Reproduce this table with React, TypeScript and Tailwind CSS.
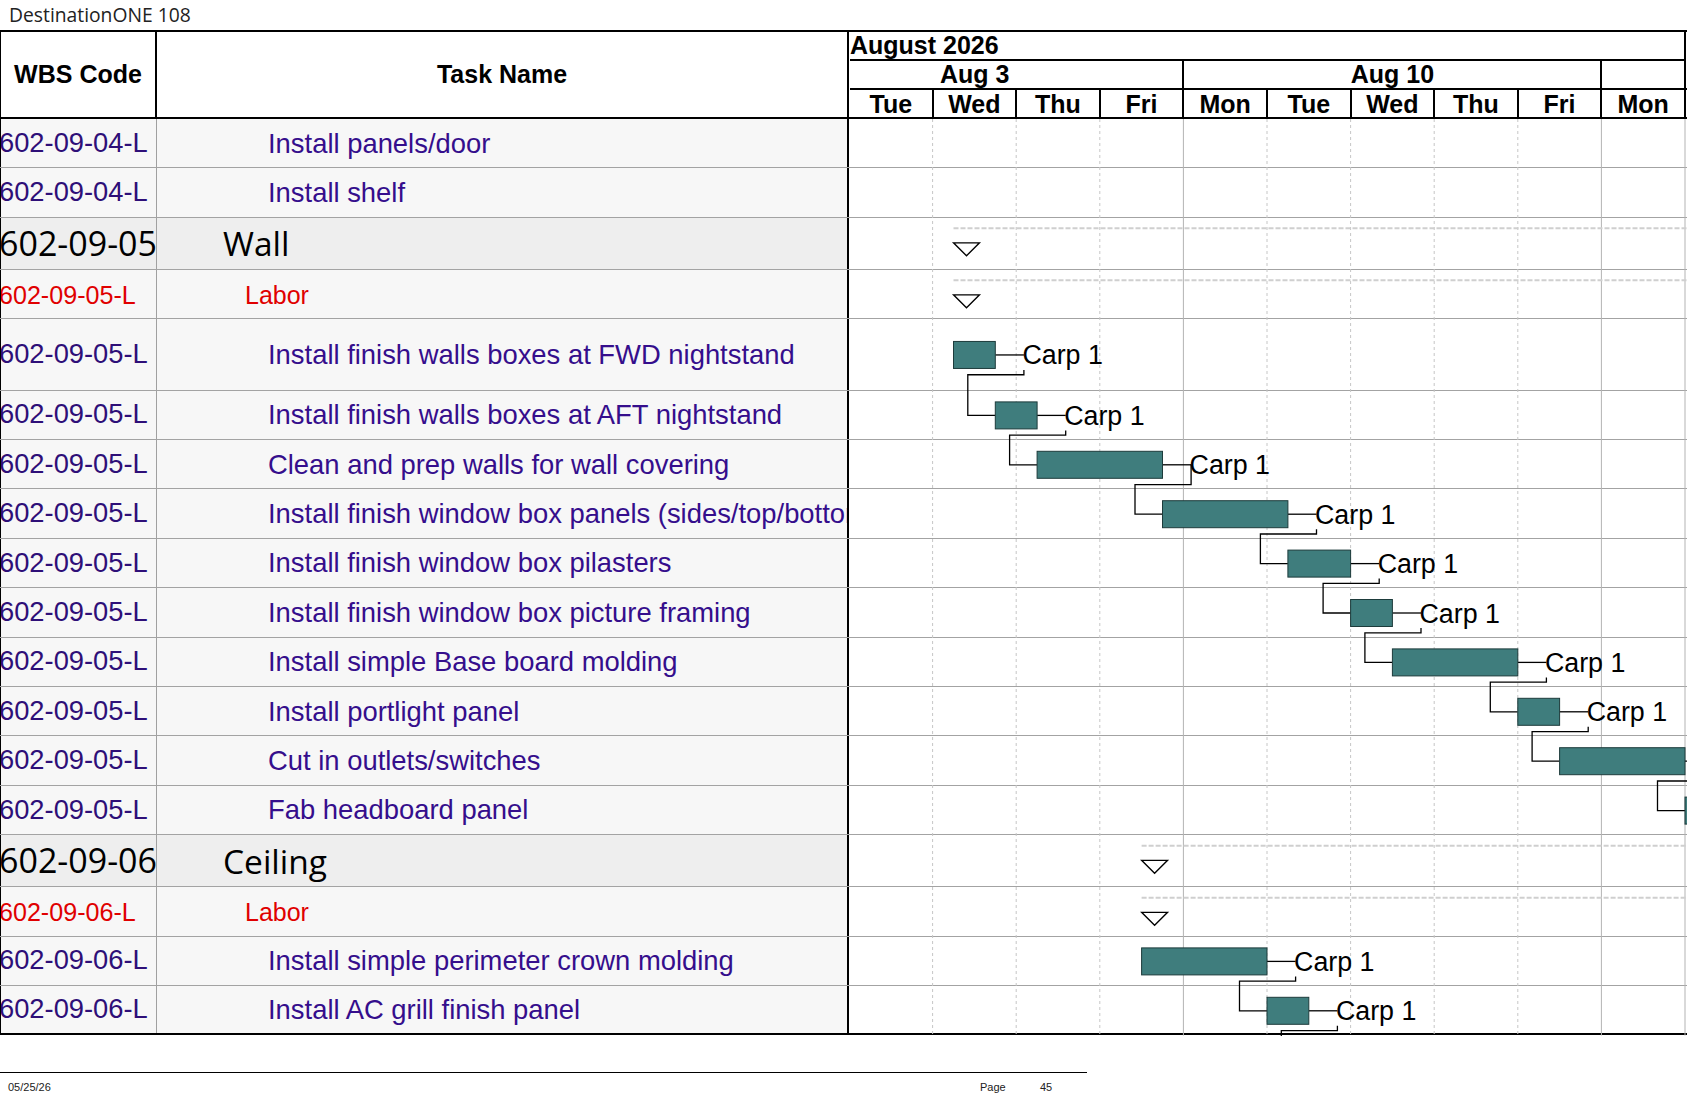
type Kind = "task" | "labor" | "summary";

interface Row {
  wbs: string;
  name: string;
  kind: Kind;
  tall?: boolean;
  bar?: [number, number];
  mark?: number;
  drop?: boolean;
}

const DAY = 83.6;
const GANTT_W = 838;

const rows: Row[] = [
  { wbs: "602-09-04-L", name: "Install panels/door", kind: "task" },
  { wbs: "602-09-04-L", name: "Install shelf", kind: "task" },
  { wbs: "602-09-05", name: "Wall", kind: "summary", mark: 1.25 },
  { wbs: "602-09-05-L", name: "Labor", kind: "labor", mark: 1.25 },
  { wbs: "602-09-05-L", name: "Install finish walls boxes at FWD nightstand", kind: "task", tall: true, bar: [1.25, 1.75] },
  { wbs: "602-09-05-L", name: "Install finish walls boxes at AFT nightstand", kind: "task", bar: [1.75, 2.25] },
  { wbs: "602-09-05-L", name: "Clean and prep walls for wall covering", kind: "task", bar: [2.25, 3.75], drop: true },
  { wbs: "602-09-05-L", name: "Install finish window box panels (sides/top/bottom)", kind: "task", bar: [3.75, 5.25] },
  { wbs: "602-09-05-L", name: "Install finish window box pilasters", kind: "task", bar: [5.25, 6] },
  { wbs: "602-09-05-L", name: "Install finish window box picture framing", kind: "task", bar: [6, 6.5] },
  { wbs: "602-09-05-L", name: "Install simple Base board molding", kind: "task", bar: [6.5, 8] },
  { wbs: "602-09-05-L", name: "Install portlight panel", kind: "task", bar: [8, 8.5] },
  { wbs: "602-09-05-L", name: "Cut in outlets/switches", kind: "task", bar: [8.5, 10] },
  { wbs: "602-09-05-L", name: "Fab headboard panel", kind: "task", bar: [10, 10.5] },
  { wbs: "602-09-06", name: "Ceiling", kind: "summary", mark: 3.5 },
  { wbs: "602-09-06-L", name: "Labor", kind: "labor", mark: 3.5 },
  { wbs: "602-09-06-L", name: "Install simple perimeter crown molding", kind: "task", bar: [3.5, 5] },
  { wbs: "602-09-06-L", name: "Install AC grill finish panel", kind: "task", bar: [5, 5.5] },
];

const heightOf = (r: Row) => (r.tall ? 71.5 : r.kind === "summary" ? 52 : 49.4);
const heightClass = (r: Row) =>
  r.tall ? "h-[71.5px]" : r.kind === "summary" ? "h-[52px]" : "h-[49.4px]";

const days = ["Tue", "Wed", "Thu", "Fri", "Mon", "Tue", "Wed", "Thu", "Fri", "Mon"];

function Chart() {
  let acc = 0;
  const geo = rows.map((r) => {
    const h = heightOf(r);
    const g = { top: acc, mid: acc + h / 2 };
    acc += h;
    return g;
  });
  const total = acc;

  const grid = [];
  for (let k = 1; k <= 10; k++) {
    const solid = k === 4 || k === 9 || k === 10;
    grid.push(
      <line
        key={"g" + k}
        x1={k * DAY}
        x2={k * DAY}
        y1={0}
        y2={total}
        stroke={solid ? "#b3b3b3" : "#c6c6c6"}
        strokeWidth={1}
        strokeDasharray={solid ? undefined : "3 3"}
      />
    );
  }

  const summary = [];
  const links = [];
  const bars = [];

  rows.forEach((r, i) => {
    const g = geo[i];
    if (r.mark !== undefined) {
      const x = r.mark * DAY;
      const t = g.top + 25;
      summary.push(
        <g key={"s" + i}>
          <line x1={x} x2={GANTT_W} y1={g.top + 10.5} y2={g.top + 10.5} stroke="#cfcfcf" strokeWidth={2} strokeDasharray="5 2" />
          <polygon points={`${x},${t} ${x + 26},${t} ${x + 13},${t + 13}`} fill="#fff" stroke="#000" strokeWidth={1.3} />
        </g>
      );
    }
    if (r.bar) {
      const [s, e] = r.bar;
      const x1 = s * DAY;
      const x2 = e * DAY;
      const bottom = g.mid + 13.5;
      const lx = x2 + 28.6;
      bars.push(
        <g key={"b" + i}>
          <line x1={x2} x2={lx} y1={g.mid} y2={g.mid} stroke="#000" strokeWidth={1.3} />
          <rect x={x1} y={g.mid - 13.5} width={x2 - x1} height={27} fill="#3f7d7d" stroke="#1d3b3b" strokeWidth={1} />
          <text
            x={lx - 1.5}
            y={g.mid + 9.5}
            fontSize={26.8}
            fontFamily="'Liberation Sans', Arial, sans-serif"
            fill="#000"
          >
            Carp 1
          </text>
        </g>
      );
      const last = i === rows.length - 1;
      const nextStart = last ? 5.5 : rows[i + 1].bar?.[0];
      if (nextStart !== undefined) {
        const nextMid = last ? total + 30 : geo[i + 1].mid;
        const dy = bottom + 6.3;
        const ex = nextStart * DAY - 27.5;
        links.push(
          <path
            key={"l" + i}
            d={`M${lx} ${r.drop ? g.mid : bottom + 1.5} V${dy} H${ex} V${nextMid} H${nextStart * DAY}`}
            fill="none"
            stroke="#000"
            strokeWidth={1.3}
          />
        );
      }
    }
  });

  return (
    <svg
      className="absolute left-[849px] top-0"
      width={GANTT_W}
      height={total}
      viewBox={`0 0 ${GANTT_W} ${total}`}
    >
      {grid}
      {summary}
      {links}
      {bars}
    </svg>
  );
}

function BodyRow({ r, last }: { r: Row; last: boolean }) {
  const bg = r.kind === "summary" ? "bg-[#eeeeee]" : "bg-[#f7f7f7]";
  const line = last ? "border-black border-b-2" : "border-[#a3a3a3] border-b";
  const wbsText =
    r.kind === "summary"
      ? "text-black text-[34px] font-['Open_Sans',sans-serif]"
      : r.kind === "labor"
      ? "text-[#e00000] text-[25.1px] pt-[3px]"
      : "text-[#2e0f78] text-[27.3px]";
  const nameText =
    r.kind === "summary"
      ? "text-black text-[33.5px] font-['Open_Sans',sans-serif] pl-[66px]"
      : r.kind === "labor"
      ? "text-[#e00000] text-[25px] pl-[88px] pt-[3px]"
      : "text-[#350e8c] text-[27.4px] pl-[111px]";
  return (
    <div className={`flex ${heightClass(r)} ${line}`}>
      <div className={`w-[157px] shrink-0 border-l border-r border-l-black border-r-[#a0a0a0] ${bg} flex items-center overflow-hidden`}>
        <span className={`${wbsText} whitespace-nowrap -ml-[2px]`}>{r.wbs}</span>
      </div>
      <div className={`w-[692px] shrink-0 border-r-2 border-black ${bg} flex items-center overflow-hidden whitespace-nowrap ${nameText}`}>
        {r.name}
      </div>
      <div className="w-[838px] shrink-0 bg-white" />
    </div>
  );
}

export default function App() {
  return (
    <div className="w-[1687px] h-[1097px] bg-white overflow-hidden font-['Liberation_Sans',Arial,sans-serif] text-black">
      <div className="h-[30px] flex items-center pl-[9px] text-[19.3px] text-[#222] font-['Open_Sans',sans-serif]">
        DestinationONE 108
      </div>

      <div className="flex h-[89px] border-t-2 border-b-2 border-black">
        <div className="w-[157px] shrink-0 border-l border-r-2 border-black flex items-center justify-center font-bold text-[25px]">
          WBS Code
        </div>
        <div className="w-[692px] shrink-0 border-r-2 border-black flex items-center justify-center font-bold text-[25px]">
          Task Name
        </div>
        <div className="w-[838px] shrink-0 flex flex-col pl-[1px] font-bold text-[25px] leading-none">
          <div className="h-[29px] w-[836px] border-b-2 border-r-2 border-black flex items-center">
            August 2026
          </div>
          <div className="h-[29px] flex border-b-2 border-black">
            <div className="w-[334.4px] shrink-0 border-r-2 border-black flex items-center justify-center pr-[83px]">
              Aug 3
            </div>
            <div className="w-[418px] shrink-0 border-r-2 border-black flex items-center justify-center">
              Aug 10
            </div>
            <div className="w-[83.6px] shrink-0 border-r-2 border-black" />
          </div>
          <div className="flex-1 flex">
            {days.map((d, i) => (
              <div key={i} className="w-[83.6px] shrink-0 border-r-2 border-black flex items-center justify-center pt-[2px]">
                {d}
              </div>
            ))}
          </div>
        </div>
      </div>

      <div className="relative">
        {rows.map((r, i) => (
          <BodyRow key={i} r={r} last={i === rows.length - 1} />
        ))}
        <Chart />
      </div>

      <div className="mt-[37px] w-[1087px] border-t border-black">
        <div className="flex pt-[6px] text-[11px] text-[#222]">
          <span className="pl-[8px] w-[980px] shrink-0">05/25/26</span>
          <span className="w-[60px] shrink-0">Page</span>
          <span>45</span>
        </div>
      </div>
    </div>
  );
}
